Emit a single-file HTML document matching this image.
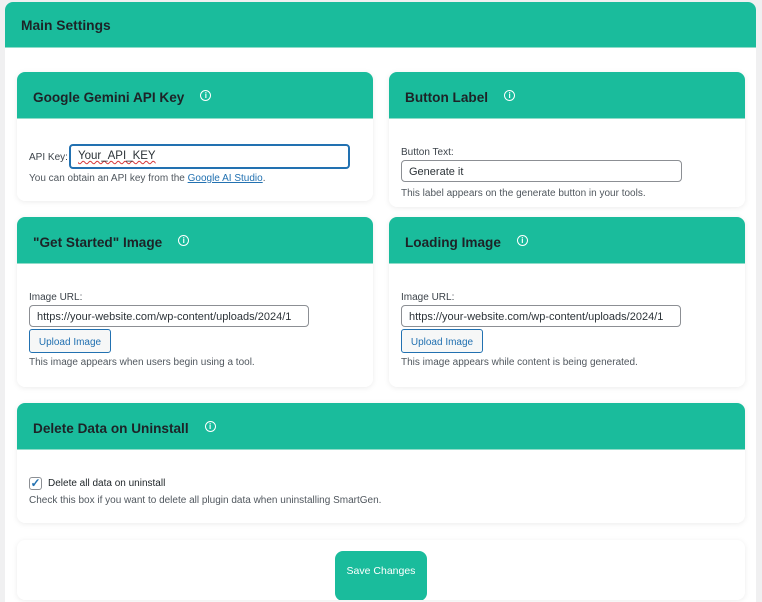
<!DOCTYPE html>
<html><head><style>
body{margin:0;width:762px;height:588px;overflow:hidden;background:#f0f0f1;font-family:"Liberation Sans",sans-serif;position:relative}
.outer{position:absolute;left:5px;top:2px;width:751px;height:600px;background:#fff;border-radius:8px 8px 0 0;overflow:hidden}
.mh{height:45px;background:#1abc9c;color:#1d2327;font-size:13.8px;font-weight:bold;line-height:47px;padding-left:16px;border-bottom:1px solid #8fdcc9}
.card{position:absolute;background:#fff;border-radius:8px;box-shadow:0 1px 6px rgba(0,0,0,.08);overflow:hidden}
.ch{height:46px;background:#1abc9c;color:#1d2327;font-size:13.6px;font-weight:bold;padding-left:16px;line-height:52px;border-bottom:1px solid #8fdcc9;position:relative}
.ic{display:inline-block;width:9px;height:9px;border:1.5px solid #fff;border-radius:50%;color:#fff;font-size:8px;line-height:9px;text-align:center;vertical-align:4px;margin-left:16px}
.lab{font-size:10px;color:#3c434a;position:absolute}
.desc{font-size:10px;color:#50575e;position:absolute}
.inp{position:absolute;height:22px;border:1px solid #8c8f94;border-radius:4px;font-size:11px;color:#2c3338;line-height:22px;padding-left:7px;box-sizing:border-box;overflow:hidden;white-space:nowrap;background:#fff}
.btn{position:absolute;height:24px;border:1px solid #2271b1;border-radius:3px;background:#f6f7f7;color:#2271b1;font-size:10px;line-height:25px;text-align:center;box-sizing:border-box}
a{color:#2271b1}
</style></head><body>
<div class="outer"><div class="mh">Main Settings</div></div>

<div class="card" style="left:17px;top:72px;width:356px;height:129px">
<div class="ch">Google Gemini API Key<span class="ic">i</span></div>
<span class="lab" style="left:12px;top:80px">API Key:</span>
<div class="inp" style="left:52px;top:72px;width:281px;height:25px;border:2px solid #2271b1;line-height:21px;font-size:11.5px"><span style="text-decoration:underline wavy #d63638;text-decoration-thickness:1px">Your_API_KEY</span></div>
<span class="desc" style="left:12px;top:101px">You can obtain an API key from the <a href="#">Google AI Studio</a>.</span>
</div>

<div class="card" style="left:389px;top:72px;width:356px;height:135px">
<div class="ch">Button Label<span class="ic">i</span></div>
<span class="lab" style="left:12px;top:75px">Button Text:</span>
<div class="inp" style="left:12px;top:88px;width:281px">Generate it</div>
<span class="desc" style="left:12px;top:116px">This label appears on the generate button in your tools.</span>
</div>

<div class="card" style="left:17px;top:217px;width:356px;height:170px">
<div class="ch">"Get Started" Image<span class="ic">i</span></div>
<span class="lab" style="left:12px;top:75px">Image URL:</span>
<div class="inp" style="left:12px;top:88px;width:280px">https://your-website.com/wp-content/uploads/2024/1</div>
<div class="btn" style="left:12px;top:112px;width:82px">Upload Image</div>
<span class="desc" style="left:12px;top:140px">This image appears when users begin using a tool.</span>
</div>

<div class="card" style="left:389px;top:217px;width:356px;height:170px">
<div class="ch">Loading Image<span class="ic">i</span></div>
<span class="lab" style="left:12px;top:75px">Image URL:</span>
<div class="inp" style="left:12px;top:88px;width:280px">https://your-website.com/wp-content/uploads/2024/1</div>
<div class="btn" style="left:12px;top:112px;width:82px">Upload Image</div>
<span class="desc" style="left:12px;top:140px">This image appears while content is being generated.</span>
</div>

<div class="card" style="left:17px;top:403px;width:728px;height:120px">
<div class="ch">Delete Data on Uninstall<span class="ic">i</span></div>
<div style="position:absolute;left:12px;top:74px;width:11px;height:11px;border:1px solid #8c8f94;border-radius:3px;color:#2271b1;font-size:12px;font-weight:bold;line-height:11px;text-align:center">✓</div>
<span class="lab" style="left:31px;top:75px;color:#1d2327">Delete all data on uninstall</span>
<span class="desc" style="left:12px;top:92px">Check this box if you want to delete all plugin data when uninstalling SmartGen.</span>
</div>

<div class="card" style="left:17px;top:540px;width:728px;height:60px">
<div style="position:absolute;left:318px;top:11px;width:92px;height:50px;background:#1abc9c;border-radius:8px;color:#fff;font-size:10.5px;text-align:center;line-height:40px">Save Changes</div>
</div>
</body></html>
